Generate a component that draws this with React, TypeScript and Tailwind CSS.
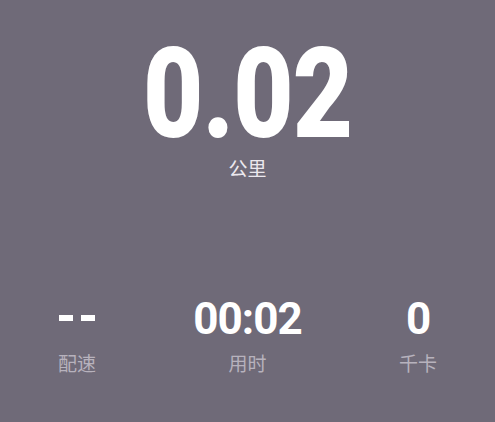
import React from 'react';

const Stat = ({ value, label }: { value: React.ReactNode; label: string }) => (
  <div className="flex w-[100px] flex-col items-center">
    <div className="flex h-[44px] items-center text-[44px] font-bold leading-none text-white [font-family:Roboto,sans-serif] tracking-[-1px]">
      {value}
    </div>
    <div className="mt-[12px] text-[19px] leading-none text-[#b7b2bd] [font-family:'Noto_Sans_CJK_SC',sans-serif]">
      {label}
    </div>
  </div>
);

const App = () => {
  return (
    <div className="flex h-[422px] w-[495px] flex-col bg-[#6f6a78]">
      <div className="flex flex-col items-center pt-[30px]">
        <div className="origin-center scale-x-[0.82] text-[127px] font-black leading-none text-white [font-family:Roboto,sans-serif] tracking-[-1px]">
          0.02
        </div>
        <div className="mt-[1px] text-[19px] leading-none text-[#ebe8ee] [font-family:'Noto_Sans_CJK_SC',sans-serif]">
          公里
        </div>
      </div>
      <div className="mt-auto mb-[50px] flex justify-between px-[27px]">
        <Stat
          value={
            <span className="flex gap-[8px] pb-[2px]">
              <span className="h-[6px] w-[14px] bg-white" />
              <span className="h-[6px] w-[14px] bg-white" />
            </span>
          }
          label="配速"
        />
        <Stat value="00:02" label="用时" />
        <Stat value="0" label="千卡" />
      </div>
    </div>
  );
};

export default App;
